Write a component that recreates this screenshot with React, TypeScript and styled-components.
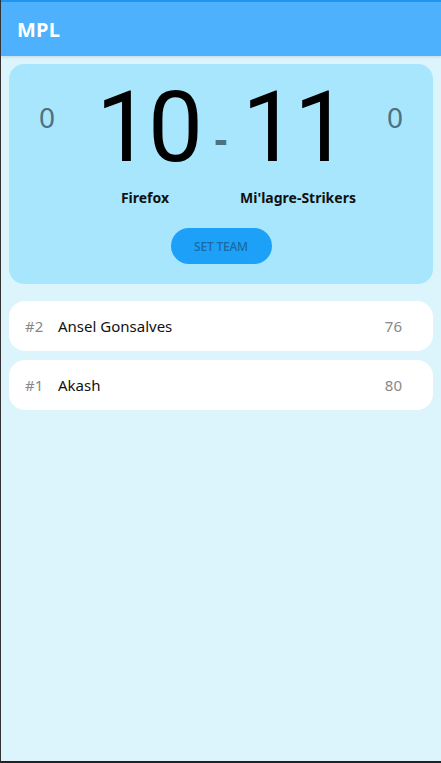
import React from 'react'
import styled, { createGlobalStyle } from 'styled-components'

const GlobalStyle = createGlobalStyle`
  html, body {
    margin: 0;
    padding: 0;
    background: #dcf5fd;
    font-family: 'Noto Sans', 'Open Sans', sans-serif;
  }
`

type Player = { rank: number; name: string; score: number }

const players: Player[] = [
  { rank: 2, name: 'Ansel Gonsalves', score: 76 },
  { rank: 1, name: 'Akash', score: 80 },
]

export default function App() {
  return (
    <Screen>
      <GlobalStyle />
      <StatusStrip />
      <Header>
        <Title>MPL</Title>
      </Header>
      <Content>
        <ScoreCard>
          <ScoreGrid>
            <SideScore>0</SideScore>
            <BigScore>10</BigScore>
            <Dash>-</Dash>
            <BigScore>11</BigScore>
            <SideScore>0</SideScore>
            <span />
            <TeamName $side="left">Firefox</TeamName>
            <span />
            <TeamName $side="right">Mi'lagre-Strikers</TeamName>
            <span />
          </ScoreGrid>
          <SetTeamButton>SET TEAM</SetTeamButton>
        </ScoreCard>
        <List>
          {players.map((p) => (
            <Row key={p.rank}>
              <Rank>#{p.rank}</Rank>
              <Name>{p.name}</Name>
              <Points>{p.score}</Points>
            </Row>
          ))}
        </List>
      </Content>
    </Screen>
  )
}

const Screen = styled.div`
  width: 441px;
  height: 763px;
  box-sizing: border-box;
  border-left: 1px solid #333;
  border-bottom: 2px solid #222;
  background: #dcf5fd;
  overflow: hidden;
`

const StatusStrip = styled.div`
  height: 2px;
  background: #2196f3;
`

const Header = styled.header`
  height: 54px;
  background: #4db1fd;
  display: flex;
  align-items: center;
  padding: 0 16px;
  box-shadow: 0 1px 3px rgba(0, 0, 0, 0.12);
`

const Title = styled.h1`
  margin: 0;
  color: #fff;
  font-size: 20px;
  font-weight: 700;
  letter-spacing: 0.2px;
`

const Content = styled.main`
  padding: 8px 8px 0 8px;
`

const ScoreCard = styled.section`
  background: #a8e6fd;
  border-radius: 15px;
  height: 220px;
  box-sizing: border-box;
  padding-top: 15px;
  display: flex;
  flex-direction: column;
  align-items: center;
`

const ScoreGrid = styled.div`
  width: 100%;
  display: grid;
  grid-template-columns: 76px 1fr 20px 1fr 76px;
  align-items: center;
`

const SideScore = styled.div`
  text-align: center;
  font-size: 28px;
  color: #4d7181;
  margin-bottom: 22px;
`

const BigScore = styled.div`
  text-align: center;
  font-family: Roboto, 'Noto Sans', sans-serif;
  font-size: 98px;
  line-height: 98px;
  letter-spacing: -3px;
  color: #000;
`

const Dash = styled.div`
  text-align: center;
  font-size: 40px;
  font-weight: 700;
  color: #4d7181;
  margin-top: 19px;
`

const TeamName = styled.div<{ $side: 'left' | 'right' }>`
  text-align: center;
  font-size: 14px;
  font-weight: 700;
  color: #111;
  margin-top: 11px;
  white-space: nowrap;
  ${(p) => (p.$side === 'left' ? 'padding-right: 6px;' : 'padding-left: 8px;')}
`

const SetTeamButton = styled.button`
  margin-top: 21px;
  width: 101px;
  height: 36px;
  border: none;
  border-radius: 18px;
  background: #1da1f8;
  color: #1a6aa3;
  font-family: inherit;
  font-size: 12px;
  font-weight: 500;
  letter-spacing: -0.2px;
`

const List = styled.div`
  display: flex;
  flex-direction: column;
  gap: 9px;
  margin-top: 17px;
`

const Row = styled.div`
  height: 50px;
  background: #fff;
  border-radius: 16px;
  display: flex;
  align-items: center;
  padding: 0 31px 0 16px;
  font-size: 15px;
`

const Rank = styled.span`
  width: 33px;
  color: #888;
`

const Name = styled.span`
  flex: 1;
  color: #111;
`

const Points = styled.span`
  color: #888;
`
